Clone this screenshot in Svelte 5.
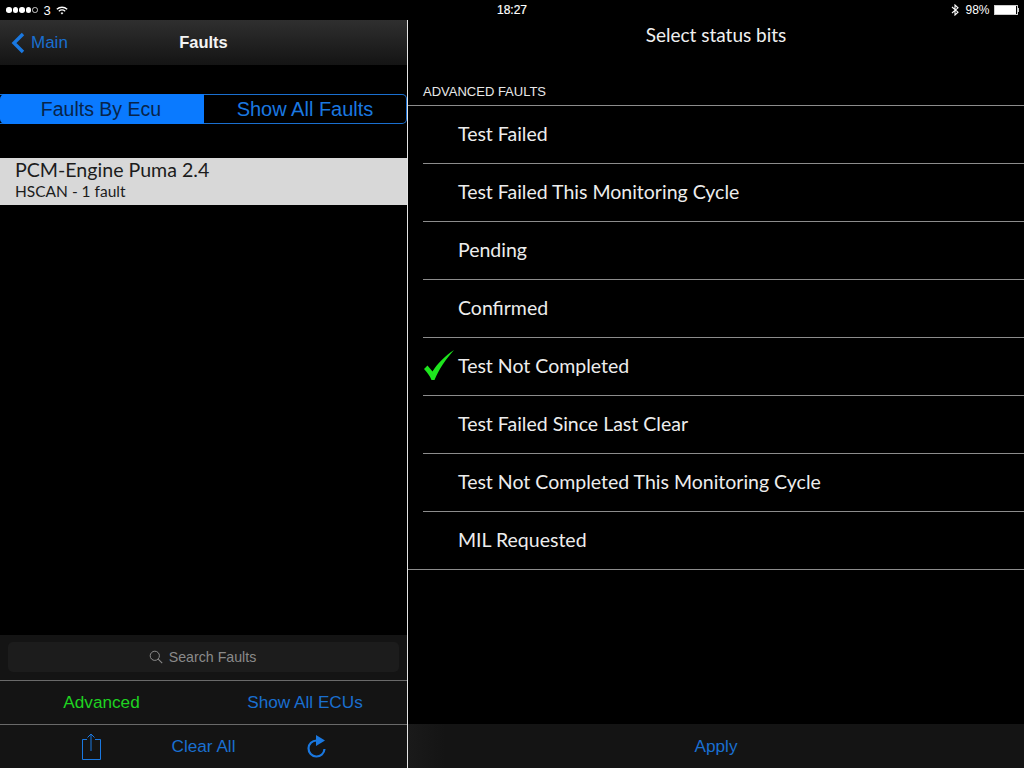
<script>
  const bits = [
    { name: 'Test Failed' },
    { name: 'Test Failed This Monitoring Cycle' },
    { name: 'Pending' },
    { name: 'Confirmed' },
    { name: 'Test Not Completed', checked: true },
    { name: 'Test Failed Since Last Clear' },
    { name: 'Test Not Completed This Monitoring Cycle' },
    { name: 'MIL Requested' }
  ];
</script>

<div class="screen">
  <header class="status">
    <div class="status-left">
      <span class="dot"></span><span class="dot"></span><span class="dot"></span><span class="dot"></span><span class="dot empty"></span>
      <span class="carrier">3</span>
      <svg class="wifi" width="12" height="9" viewBox="0 0 12 9">
        <path d="M.8 3.200C3.800.6 8.200.6 11.200 3.200" fill="none" stroke="#fff" stroke-width="1.300" />
        <path d="M2.800 5.200c1.900-1.500 4.500-1.500 6.400 0" fill="none" stroke="#fff" stroke-width="1.300" />
        <path d="M4.600 6.900c.8-.6 2-.6 2.800 0L6 8.600z" fill="#fff" />
      </svg>
    </div>
    <div class="clock">18:27</div>
    <div class="status-right">
      <svg width="8" height="12" viewBox="0 0 8 12">
        <path d="M1 3l6 5.200L4 11V1l3 2.800L1 9" fill="none" stroke="#fff" stroke-width="1.100" />
      </svg>
      <span class="pct">98%</span>
      <span class="battery"><span class="fill"></span></span>
      <span class="nub"></span>
    </div>
  </header>

  <div class="split">
    <section class="left">
      <nav class="navbar">
        <div class="back">
          <svg width="14" height="22" viewBox="0 0 14 22">
            <path d="M12 2 3 11l9 9" fill="none" stroke="#1a78e0" stroke-width="3.400" />
          </svg>
          <span>Main</span>
        </div>
        <div class="nav-title">Faults</div>
      </nav>

      <div class="segments">
        <div class="seg on">Faults By Ecu</div>
        <div class="seg">Show All Faults</div>
      </div>

      <div class="ecu">
        <div class="ecu-name">PCM-Engine Puma 2.4</div>
        <div class="ecu-sub">HSCAN - 1 fault</div>
      </div>

      <div class="spacer"></div>

      <div class="search-bar">
        <div class="search">
          <svg width="14" height="14" viewBox="0 0 14 14">
            <circle cx="5.800" cy="5.800" r="4.600" fill="none" stroke="#8a8a8a" stroke-width="1" />
            <path d="m9.200 9.200 4 4" stroke="#8a8a8a" stroke-width="1.100" />
          </svg>
          <span>Search Faults</span>
        </div>
      </div>
      <div class="filters">
        <span class="green">Advanced</span>
        <span class="blue">Show All ECUs</span>
      </div>
      <div class="toolbar">
        <svg width="22" height="28" viewBox="0 0 22 28">
          <path d="M7 6.500H2.500v20h18v-20H15M11 18V1M7.500 4.500 11 1l3.500 3.500" fill="none" stroke="#1a78e0" stroke-width="1" />
        </svg>
        <span class="blue">Clear All</span>
        <svg width="22" height="26" viewBox="0 0 22 26">
          <path d="M11.500 6.500a8 8 0 1 0 8 8.500" fill="none" stroke="#1a78e0" stroke-width="2.200" />
          <path d="M11 1l9 5.500-9 5.500z" fill="#1a78e0" />
        </svg>
      </div>
    </section>

    <section class="right">
      <div class="title">Select status bits</div>
      <div class="group-head">ADVANCED FAULTS</div>
      <ul>
        {#each bits as bit}
          <li>
            {#if bit.checked}
              <svg class="check" width="32" height="32" viewBox="0 0 32 32">
                <path d="M1 20l3.500-3.500 5 6C14 15 22 7 31 1 23 10 16 20 11.500 31h-3C7 27 4 23 1 20z" fill="#1ee51e" />
              </svg>
            {/if}
            <span>{bit.name}</span>
          </li>
        {/each}
      </ul>
      <div class="spacer"></div>
      <div class="apply"><span class="blue">Apply</span></div>
    </section>
  </div>
</div>

<style>
  :global(body) {
    background: #000;
  }

  .screen {
    width: 1024px;
    height: 768px;
    display: flex;
    flex-direction: column;
    background: #000;
    color: #fff;
    font-family: "Liberation Sans", Arial, sans-serif;
    overflow: hidden;
  }

  .status {
    height: 20px;
    flex: none;
    display: grid;
    grid-template-columns: 1fr auto 1fr;
    align-items: center;
    padding: 0 6px;
    font-size: 12px;
  }

  .status-left {
    display: flex;
    align-items: center;
    gap: 1px;
  }

  .dot {
    width: 5.500px;
    height: 5.500px;
    border-radius: 50%;
    background: #fff;
  }

  .dot.empty {
    background: none;
    border: 1px solid #ccc;
    box-sizing: border-box;
  }

  .carrier {
    margin: 0 4px 0 5px;
    font-size: 13px;
  }

  .clock {
    -webkit-text-stroke: 0.2px #fff;
  }

  .status-right {
    display: flex;
    justify-content: flex-end;
    align-items: center;
    margin-right: -1px;
  }

  .pct {
    margin: 0 4px 0 6px;
  }

  .battery {
    width: 22px;
    height: 8px;
    border: 1px solid #ccc;
    display: block;
  }

  .fill {
    display: block;
    height: 100%;
    width: 98%;
    background: #fff;
  }

  .nub {
    width: 1.500px;
    height: 4px;
    background: #ccc;
  }

  .split {
    flex: 1;
    display: flex;
    min-height: 0;
  }

  .left {
    width: 407px;
    flex: none;
    display: flex;
    flex-direction: column;
    border-right: 1px solid #e4e4e4;
  }

  .right {
    flex: 1;
    display: flex;
    flex-direction: column;
  }

  .navbar {
    position: relative;
    height: 45px;
    flex: none;
    display: flex;
    align-items: center;
    justify-content: center;
    background: linear-gradient(#2f2f2f, #141414);
  }

  .back {
    position: absolute;
    left: 11px;
    top: 12px;
    display: flex;
    align-items: center;
    gap: 6px;
    color: #1a6fd0;
    font-size: 17px;
  }

  .nav-title {
    font-size: 16.500px;
    font-weight: bold;
    color: #f4f4f4;
  }

  .segments {
    display: flex;
    height: 30px;
    margin-top: 29px;
    flex: none;
    box-sizing: border-box;
    border: 1px solid #1a6fd0;
    border-left: none;
    border-radius: 0 5px 5px 0;
  }

  .seg {
    flex: 1;
    display: flex;
    align-items: center;
    justify-content: center;
    font-size: 20px;
    color: #1a78e0;
  }

  .seg.on {
    flex: none;
    width: 204px;
    margin: -1px 0;
    padding-right: 2px;
    box-sizing: border-box;
    background: #0a7aff;
    color: #08244a;
    font-size: 19.500px;
    border-top-left-radius: 5px;
    border-bottom-left-radius: 5px;
  }

  .ecu {
    height: 47px;
    flex: none;
    margin-top: 34px;
    box-sizing: border-box;
    padding: 0 15px;
    background: #d8d8d8;
    color: #1c1c1c;
    font-family: Lato, sans-serif;
  }

  .ecu-name {
    font-size: 19.600px;
    line-height: 24px;
  }

  .ecu-sub {
    font-size: 15.500px;
    line-height: 18px;
  }

  .spacer {
    flex: 1;
  }

  .search-bar {
    height: 45px;
    flex: none;
    box-sizing: border-box;
    padding: 7px 8px 8px;
    background: #141414;
  }

  .search {
    height: 30px;
    display: flex;
    align-items: center;
    justify-content: center;
    gap: 6px;
    padding-right: 2px;
    box-sizing: border-box;
    background: #1c1c1c;
    border-radius: 5px;
    color: #8a8a8a;
    font-size: 14.200px;
  }

  .filters {
    height: 44px;
    flex: none;
    display: grid;
    grid-template-columns: 203px 1fr;
    align-items: center;
    justify-items: center;
    box-sizing: border-box;
    background: #141414;
    border-top: 1px solid #6a6a6a;
    font-size: 17.200px;
  }

  .green {
    color: #1fd321;
  }

  .blue {
    color: #1a6fd0;
  }

  .toolbar {
    height: 44px;
    flex: none;
    display: flex;
    align-items: center;
    justify-content: space-between;
    box-sizing: border-box;
    padding: 0 80px;
    background: #141414;
    border-top: 1px solid #6a6a6a;
    font-size: 17.200px;
  }

  .title {
    height: 29px;
    flex: none;
    text-align: center;
    font-family: Lato, sans-serif;
    font-size: 19px;
    line-height: 29px;
    color: #f0f0f0;
  }

  .group-head {
    height: 57px;
    flex: none;
    box-sizing: border-box;
    padding: 35px 0 0 15px;
    font-size: 13px;
    line-height: 16px;
    color: #e8e8e8;
    border-bottom: 1px solid #8c8c8c;
  }

  ul {
    list-style: none;
    margin: 0;
    padding: 0;
    border-bottom: 1px solid #8c8c8c;
  }

  li {
    position: relative;
    height: 58px;
    box-sizing: border-box;
    margin-left: 15px;
    padding: 0 0 2px 35px;
    display: flex;
    align-items: center;
    font-family: Lato, sans-serif;
    font-size: 19.500px;
    color: #ededed;
    border-bottom: 1px solid #8c8c8c;
  }

  li:last-child {
    border-bottom: none;
    height: 57px;
    padding-bottom: 3px;
  }

  .check {
    position: absolute;
    left: 0;
    top: 11px;
  }

  .apply {
    height: 44px;
    flex: none;
    display: flex;
    align-items: center;
    justify-content: center;
    padding-top: 1px;
    box-sizing: border-box;
    background: linear-gradient(90deg, #1a1a1a, #141414 6%);
    font-size: 17.200px;
  }
</style>
